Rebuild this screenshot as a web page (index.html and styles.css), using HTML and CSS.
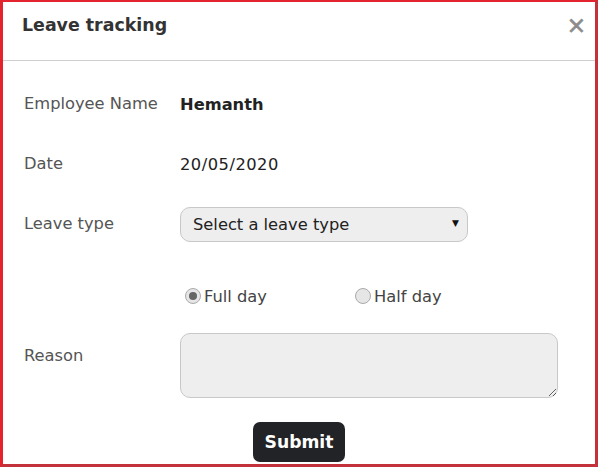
FILE: index.html
```html
<!DOCTYPE html>
<html>
<head>
<meta charset="utf-8">
<link rel="stylesheet" href="styles.css">
</head>
<body>
<div class="modal">
  <div class="modal-header">
    <h1 class="title">Leave tracking</h1>
    <span class="close">×</span>
  </div>
  <form class="modal-body">
    <div class="row">
      <span class="label">Employee Name</span>
      <span class="value strong">Hemanth</span>
    </div>
    <div class="row">
      <span class="label">Date</span>
      <span class="value date">20/05/2020</span>
    </div>
    <div class="row">
      <span class="label">Leave type</span>
      <div class="select-wrap">
        <select class="select"><option>Select a leave type</option></select>
        <span class="arrow">▼</span>
      </div>
    </div>
    <div class="radio-row">
      <label class="radio-item full"><input type="radio" name="d" class="radio" checked><span>Full day</span></label>
      <label class="radio-item"><input type="radio" name="d" class="radio"><span>Half day</span></label>
    </div>
    <div class="reason-row">
      <span class="label reason-label">Reason</span>
      <textarea class="textarea"></textarea>
    </div>
    <div class="actions">
      <button type="button" class="submit">Submit</button>
    </div>
  </form>
</div>
</body>
</html>
```
FILE: styles.css
```css
html, body {
  margin: 0;
  padding: 0;
  background: #fff;
}
body {
  font-family: "DejaVu Sans", Verdana, sans-serif;
}
.modal {
  box-sizing: border-box;
  width: 598px;
  height: 467px;
  border-top: 2px solid #e3232d;
  border-left: 3px solid #e3232d;
  border-right: 3px solid #c3313a;
  border-bottom: 3px solid #c3313a;
  overflow: hidden;
}
.modal-header {
  height: 58px;
  border-bottom: 1px solid #cfcfcf;
  display: flex;
  justify-content: space-between;
  align-items: flex-start;
  padding: 0 9px 0 19px;
}
.title {
  margin: 12px 0 0;
  font-size: 17.4px;
  line-height: 22px;
  font-weight: bold;
  color: #333;
}
.close {
  margin-top: 9px;
  font-size: 23px;
  line-height: 28px;
  color: #8c8c8c;
  -webkit-text-stroke: 0.8px #8c8c8c;
}
.modal-body {
  margin: 0;
  padding: 13px 0 0 21px;
}
.row {
  height: 60px;
  display: flex;
  align-items: center;
}
.label {
  width: 156px;
  flex: none;
  font-size: 16.3px;
  line-height: 20px;
  color: #555;
}
.value {
  font-size: 16.3px;
  color: #222;
}
.date {
  letter-spacing: 0.5px;
}
.strong {
  font-weight: bold;
}
.select-wrap {
  position: relative;
  width: 288px;
  height: 35px;
  margin-top: 1px;
}
.select {
  appearance: none;
  -webkit-appearance: none;
  box-sizing: border-box;
  width: 100%;
  height: 100%;
  margin: 0;
  padding: 0 12px;
  border: 1px solid #c8c8c8;
  border-radius: 10px;
  background: #eee;
  font-family: "DejaVu Sans", Verdana, sans-serif;
  font-size: 16.3px;
  color: #222;
}
.arrow {
  position: absolute;
  right: 9px;
  top: 10px;
  font-size: 9px;
  line-height: 12px;
  color: #111;
  pointer-events: none;
}
.radio-row {
  margin-top: 26px;
  height: 32px;
  display: flex;
  align-items: center;
  padding-left: 161px;
}
.radio-item {
  display: flex;
  align-items: center;
  font-size: 16.3px;
  color: #444;
}
.radio-item.full {
  width: 170px;
}
.radio {
  appearance: none;
  -webkit-appearance: none;
  box-sizing: border-box;
  width: 16px;
  height: 16px;
  margin: 0 3px 0 0;
  border: 1px solid #aaa;
  border-radius: 50%;
  background: #e6e6e6;
  position: relative;
}
.radio:checked::after {
  content: "";
  position: absolute;
  left: 3px;
  top: 3px;
  width: 8px;
  height: 8px;
  border-radius: 50%;
  background: #666;
}
.reason-row {
  margin-top: 21px;
  display: flex;
  align-items: flex-start;
}
.reason-label {
  padding-top: 13px;
}
.textarea {
  box-sizing: border-box;
  width: 378px;
  height: 65px;
  margin: 0;
  border: 1px solid #c8c8c8;
  border-radius: 10px;
  background: #eee;
  font-family: "DejaVu Sans", Verdana, sans-serif;
  font-size: 16px;
}
.actions {
  margin-top: 24px;
  padding-left: 229px;
}
.submit {
  width: 92px;
  height: 40px;
  border: none;
  border-radius: 7px;
  background: #222326;
  color: #fff;
  font-family: "DejaVu Sans", Verdana, sans-serif;
  font-size: 17.2px;
  font-weight: bold;
  padding: 0;
}
```
